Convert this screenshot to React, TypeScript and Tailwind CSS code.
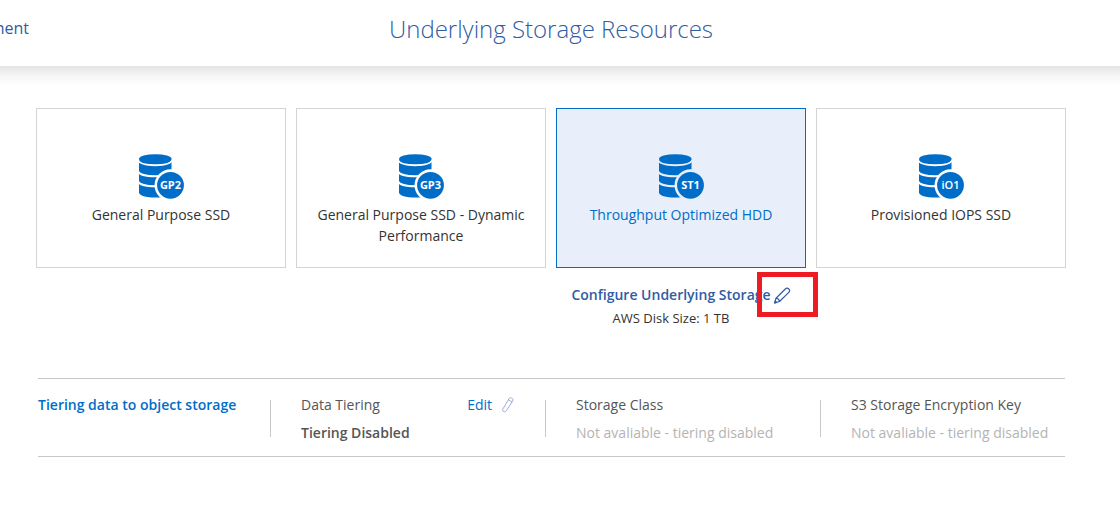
import React from "react";

type Disk = { name: string; code: string; selected?: boolean; small?: boolean };

const disks: Disk[] = [
  { name: "General Purpose SSD", code: "GP2" },
  { name: "General Purpose SSD - Dynamic Performance", code: "GP3" },
  { name: "Throughput Optimized HDD", code: "ST1", selected: true },
  { name: "Provisioned IOPS SSD", code: "iO1", small: true },
];

function DiskIcon({ code, selected, small }: Disk) {
  const gap = selected ? "#e8effa" : "#ffffff";
  return (
    <svg width="48" height="46" viewBox="0 0 48 46" aria-hidden="true">
      <path d="M2 6v32.500c0 3.100 7 5 16.500 5s16-1.900 16-5V6z" fill="#006dc9" />
      <path
        d="M1 6c1.500 3.700 8 5.200 17.300 5.200s15.500-1.500 17-5.200M1 17.500c1.500 3.200 8 4.700 17.300 4.700s15.500-1.500 17-4.700M1 27.500c1.500 3.200 8 4.700 17.300 4.700s15.500-1.500 17-4.700"
        fill="none"
        stroke={gap}
        strokeWidth="1.900"
      />
      <ellipse cx="18.300" cy="5" rx="16.300" ry="4.800" fill="#006dc9" />
      <circle cx="33.500" cy="31.300" r="16" fill={gap} />
      <circle cx="33.500" cy="31.300" r="13.400" fill="#006dc9" />
      <text
        x="33.500"
        y="35.300"
        textAnchor="middle"
        fontSize="11"
        fontWeight={small ? 600 : 700}
        fontFamily="'Open Sans', sans-serif"
        fill="#ffffff"
      >
        {code}
      </text>
    </svg>
  );
}

function Pencil({ thin = false }: { thin?: boolean }) {
  return thin ? (
    <svg width="12" height="16" viewBox="0 0 12 16" fill="none" stroke="#8497d6" strokeWidth="0.800" aria-hidden="true">
      <path d="M7 1.800 1 11.700c-.6 1.300-.3 2.400.7 2.900 1 .5 2 .2 2.700-.9L10.700 4c.6-1.200.3-2.300-.8-2.900S7.700.8 7 1.800zM6.500 2.800l3.500 2.200" />
    </svg>
  ) : (
    <svg width="18" height="18" viewBox="0 0 18 18" fill="none" stroke="#2f5ca3" strokeWidth="1.200" strokeLinejoin="round" aria-hidden="true">
      <path d="M1.700 17 3 12.200 12.300 3c1-1 2.500-1 3.500 0s1 2.300 0 3.300L6.500 15.500zM3 12.200c1.800.2 3.200 1.500 3.500 3.300" />
      <path d="m1.700 17 .5-2 1.500 1.400z" fill="#2f5ca3" />
    </svg>
  );
}

function Field({ label, value, children, muted = false }: { label: string; value: string; children?: React.ReactNode; muted?: boolean }) {
  return (
    <div className="h-[37px] border-l border-[#c8c8c8] pl-[30px]">
      <div className="-mt-[5px] flex h-5 items-center justify-between pr-[31px] leading-5">
        <span>{label}</span>
        {children}
      </div>
      <p className={muted ? "mt-2 leading-5 whitespace-nowrap text-[#b4b4b4]" : "mt-2 leading-5 font-semibold"}>{value}</p>
    </div>
  );
}

export default function App() {
  return (
    <div className="min-h-screen bg-white font-['Open_Sans',sans-serif] text-sm text-[#333333]">
      <header className="grid h-[66px] grid-cols-[36px_1fr_54px]">
        <a href="#environment" className="mr-[7px] flex h-14 items-center justify-end overflow-hidden text-base text-[#2f5ca3]">
          ment
        </a>
        <h1 className="flex h-[58px] items-center justify-center text-2xl font-light text-[#2f5ca3]">Underlying Storage Resources</h1>
      </header>
      <div className="h-5 bg-linear-to-b from-[#e4e4e4] via-[#f6f6f6] to-white" />

      <main className="pt-[22px] pr-[54px] pl-9">
        <div className="grid grid-cols-4 gap-2.5">
          {disks.map((disk) => (
            <button
              key={disk.code}
              type="button"
              aria-pressed={!!disk.selected}
              className={
                disk.selected
                  ? "flex h-40 flex-col items-center border border-[#006dc9] bg-[#e8effa] px-4 pt-[45px] text-[#006dc9]"
                  : "flex h-40 flex-col items-center border border-[#d4d4d4] bg-white px-4 pt-[45px]"
              }
            >
              <DiskIcon {...disk} />
              <span className="mt-1 leading-[21px]">{disk.name}</span>
            </button>
          ))}
        </div>

        <section className="grid grid-cols-4 gap-2.5 pt-4">
          <div className="col-start-3 flex flex-col items-center">
            <button type="button" className="relative flex h-[22px] items-center gap-0.5 font-semibold whitespace-nowrap text-[#2f5ca3]">
              Configure Underlying Storage
              <Pencil />
              <span className="absolute -top-3 -right-[27px] h-[45px] w-[61px] border-5 border-[#ed1c24]" />
            </button>
            <p className="mt-0.5 -ml-5 text-[13px] leading-5">AWS Disk Size: 1 TB</p>
          </div>
        </section>

        <section className="mt-[50px] mr-px ml-0.5 grid grid-cols-[232fr_275fr_275fr_245fr] border-y border-[#c8c8c8] pt-[21px] pb-[19px] text-[#555555]">
          <h2 className="-mt-[5px] leading-5 font-semibold text-[#006dc9]">Tiering data to object storage</h2>
          <Field label="Data Tiering" value="Tiering Disabled">
            <button type="button" className="flex items-center gap-2.5 text-[#006dc9]">
              Edit
              <Pencil thin />
            </button>
          </Field>
          <Field label="Storage Class" value="Not avaliable - tiering disabled" muted />
          <Field label="S3 Storage Encryption Key" value="Not avaliable - tiering disabled" muted />
        </section>
      </main>
    </div>
  );
}
